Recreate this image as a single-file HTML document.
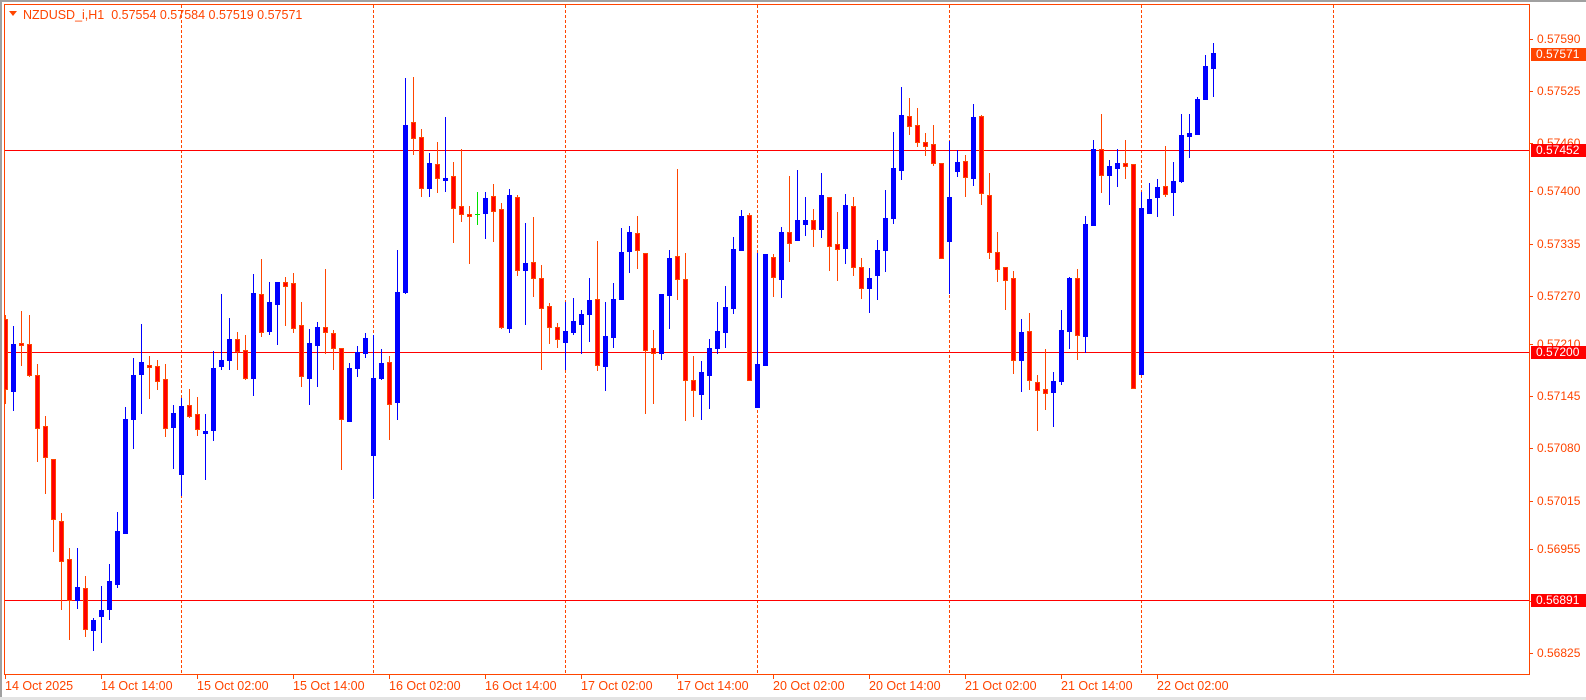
<!DOCTYPE html>
<html><head><meta charset="utf-8"><style>
html,body{margin:0;padding:0;background:#fff;width:1586px;height:700px;overflow:hidden;font-family:"Liberation Sans",sans-serif;}
#topbar{position:absolute;left:0;top:0;width:1586px;height:2px;background:#a0a0a0;}
#botbar{position:absolute;left:0;top:697px;width:1586px;height:3px;background:#e3e3e3;}
#leftbar{position:absolute;left:0;top:0;width:2px;height:700px;background:#a0a0a0;}
.t{position:absolute;color:#ff4500;font-size:12px;line-height:12px;white-space:nowrap;}
.pl{position:absolute;left:1537px;color:#ff4500;font-size:12px;line-height:12px;}
.box{position:absolute;left:1531px;width:55px;height:13px;color:#fff;font-size:12px;line-height:13px;padding-left:5px;box-sizing:border-box;}
</style></head><body>
<div id="topbar"></div><div id="leftbar"></div><div id="botbar"></div>
<svg id="ch" width="1586" height="700" style="position:absolute;left:0;top:0" xmlns="http://www.w3.org/2000/svg">
<defs><clipPath id="cp"><rect x="5" y="5" width="1524" height="669"/></clipPath></defs>
<g id="grid"></g>
<line x1="4" y1="150.5" x2="1529" y2="150.5" stroke="#ff0000" stroke-width="1"/>
<line x1="4" y1="352.5" x2="1529" y2="352.5" stroke="#ff0000" stroke-width="1"/>
<line x1="4" y1="600.5" x2="1529" y2="600.5" stroke="#ff0000" stroke-width="1"/>
<g id="cs" clip-path="url(#cp)"></g>
<rect x="4.5" y="4.5" width="1525" height="670" fill="none" stroke="#ff4500" stroke-width="1"/>
<g id="ticks"></g>
<polygon points="9,11 17,11 13,16" fill="#ff4500"/>
</svg>
<div class="t" style="left:23px;top:9px;font-size:12.5px;">NZDUSD_i,H1&nbsp; 0.57554 0.57584 0.57519 0.57571</div>
<div id="labels"></div>
<script>
var D=[
[315,319,389,403,'r'],[326,344,391,410,'b'],[311,343,343,365,'r'],[315,344,375,376,'r'],[364,375,428,461,'r'],
[416,426,457,493,'r'],[459,459,519,551,'r'],[513,521,561,609,'r'],[548,559,600,639,'r'],[548,587,600,608,'b'],
[576,588,629,636,'r'],[618,620,630,650,'b'],[586,610,616,642,'b'],[564,581,609,619,'b'],[512,531,584,587,'b'],
[407,419,533,533,'b'],[358,375,419,448,'b'],[324,362,374,413,'b'],[356,365,365,398,'r'],[360,366,381,389,'r'],
[364,379,428,436,'r'],[405,413,427,468,'b'],[398,406,474,495,'b'],[389,405,416,417,'r'],[397,414,429,435,'r'],
[414,431,431,479,'b'],[351,368,430,440,'b'],[294,360,366,369,'b'],[318,339,360,369,'b'],[332,339,351,369,'r'],
[335,350,378,379,'r'],[274,293,378,395,'b'],[259,294,332,336,'r'],[282,302,331,334,'b'],[282,282,304,344,'b'],
[277,282,286,325,'r'],[273,283,328,332,'r'],[302,325,376,386,'r'],[329,343,378,404,'b'],[322,327,345,386,'b'],
[269,327,332,353,'r'],[330,333,348,369,'r'],[348,348,419,469,'r'],[363,368,421,421,'b'],[346,352,368,376,'b'],
[333,338,353,357,'b'],[335,378,455,498,'b'],[349,363,378,379,'b'],[356,362,404,439,'r'],[250,292,402,419,'b'],
[78,125,292,293,'b'],[77,122,138,154,'r'],[129,137,188,196,'r'],[153,163,188,196,'b'],[142,164,178,192,'r'],
[117,178,178,191,'b'],[162,176,208,242,'r'],[149,206,214,221,'r'],[206,214,214,263,'r'],[192,214,214,224,'g'],
[192,198,213,238,'b'],[184,196,211,241,'r'],[203,209,327,328,'r'],[189,195,328,332,'b'],[195,197,270,275,'r'],
[223,263,270,324,'b'],[217,262,278,296,'r'],[265,278,308,369,'r'],[303,306,327,343,'r'],[323,327,339,347,'r'],
[302,331,342,369,'b'],[298,321,332,334,'b'],[310,314,324,353,'b'],[278,300,314,341,'b'],[241,299,365,370,'r'],
[302,336,366,390,'b'],[283,299,337,347,'b'],[228,252,299,299,'b'],[226,232,251,272,'b'],[216,233,250,268,'r'],
[253,253,350,413,'r'],[330,348,353,403,'r'],[294,294,353,359,'b'],[250,258,295,328,'b'],[169,256,279,299,'r'],
[253,279,380,420,'r'],[356,380,390,416,'r'],[361,372,394,419,'b'],[339,348,375,408,'b'],[302,331,348,353,'b'],
[286,307,332,347,'b'],[237,249,308,313,'b'],[210,216,250,250,'b'],[213,215,380,380,'r'],[253,364,407,407,'b'],
[254,254,365,365,'b'],[254,257,277,296,'r'],[227,232,279,297,'b'],[176,232,243,261,'r'],[170,220,240,240,'b'],
[197,220,224,235,'b'],[209,220,229,246,'r'],[173,195,229,237,'b'],[197,197,246,270,'r'],[212,244,249,280,'r'],
[194,205,248,263,'b'],[197,206,267,275,'r'],[258,267,288,298,'r'],[268,278,288,312,'b'],[240,250,275,299,'b'],
[190,218,250,271,'b'],[132,168,218,223,'b'],[87,115,170,179,'b'],[98,116,126,134,'r'],[108,125,142,146,'r'],
[133,142,146,155,'r'],[125,144,163,165,'r'],[163,163,258,258,'r'],[141,197,241,293,'b'],[150,162,171,176,'b'],
[155,161,177,196,'r'],[104,117,178,185,'b'],[115,116,193,204,'r'],[173,195,252,258,'r'],[232,252,269,281,'r'],
[267,267,280,309,'r'],[271,278,360,373,'r'],[319,332,360,391,'b'],[313,331,380,389,'r'],[375,382,390,430,'r'],
[349,389,393,409,'r'],[372,381,392,426,'b'],[310,330,381,384,'b'],[277,278,331,348,'b'],[269,278,335,359,'r'],
[216,224,336,352,'b'],[140,149,225,225,'b'],[114,149,175,192,'r'],[160,166,175,204,'b'],[149,163,168,186,'b'],
[140,163,166,178,'r'],[164,164,388,388,'r'],[192,208,374,374,'b'],[183,199,213,213,'b'],[179,187,197,216,'b'],
[146,186,194,196,'r'],[162,181,192,215,'b'],[114,135,181,182,'b'],[114,133,136,157,'b'],[97,99,134,134,'b'],
[55,66,99,99,'b'],[43,53,68,96,'b']];
var s="";
for(var k=0;k<D.length;k++){var d=D[k],x=5+8*k,c=d[4];
 var wc=c=='r'?'#ff4500':(c=='g'?'#00e000':'#0000ff');
 s+='<rect x="'+x+'" y="'+d[0]+'" width="1" height="'+Math.max(1,d[3]-d[0]+1)+'" fill="'+wc+'"/>';
 var h=d[2]-d[1]; if(h<2){h=2;}
 if(c=='r') s+='<rect x="'+(x-1.5)+'" y="'+(d[1]+0.5)+'" width="4" height="'+(h)+'" fill="#ff0000" stroke="#ff4500" stroke-width="1"/>';
 else if(c=='g') s+='<rect x="'+(x-2)+'" y="'+d[1]+'" width="5" height="1" fill="#00e000"/>';
 else s+='<rect x="'+(x-2)+'" y="'+d[1]+'" width="5" height="'+(h+1)+'" fill="#0000ff"/>';
}
document.getElementById('cs').innerHTML=s;
var g="";
[181,373,565,757,949,1141,1333].forEach(function(x){g+='<line x1="'+(x+0.5)+'" y1="5" x2="'+(x+0.5)+'" y2="674" stroke="#ff4500" stroke-width="1" stroke-dasharray="3,2"/>';});
document.getElementById('grid').innerHTML=g;
var dates=["14 Oct 2025","14 Oct 14:00","15 Oct 02:00","15 Oct 14:00","16 Oct 02:00","16 Oct 14:00","17 Oct 02:00","17 Oct 14:00","20 Oct 02:00","20 Oct 14:00","21 Oct 02:00","21 Oct 14:00","22 Oct 02:00"];
var L="",T="";
dates.forEach(function(t,i){var x=5+96*i;L+='<div class="t" style="left:'+x+'px;top:680px;font-size:12.5px">'+t+'</div>';T+='<rect x="'+x+'" y="675" width="1" height="4" fill="#ff4500"/>';});
var prices=["0.57590","0.57525","0.57460","0.57400","0.57335","0.57270","0.57210","0.57145","0.57080","0.57015","0.56955","0.56890","0.56825"];
prices.forEach(function(p){var y=39+(0.57590-parseFloat(p))*80261;L+='<div class="pl" style="top:'+Math.round(y-6)+'px">'+p+'</div>';T+='<rect x="1530" y="'+Math.round(y)+'" width="3" height="1" fill="#ff4500"/>';});
[["0.57571",54,"#ff4500"],["0.57452",150,"#ff0000"],["0.57200",352,"#ff0000"],["0.56891",600,"#ff0000"]].forEach(function(b){L+='<div class="box" style="top:'+(b[1]-6)+'px;background:'+b[2]+'">'+b[0]+'</div>';});
document.getElementById('labels').innerHTML=L;
document.getElementById('ticks').innerHTML=T;
</script>
</body></html>
